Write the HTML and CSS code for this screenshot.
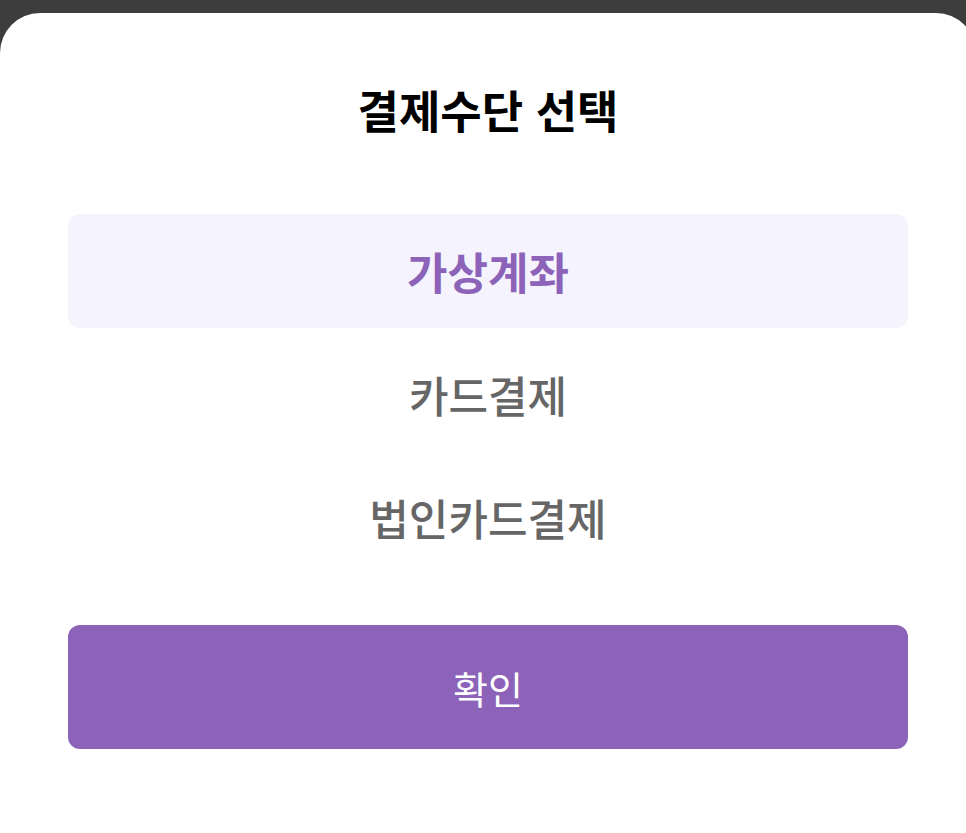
FILE: index.html
```html
<!DOCTYPE html>
<html lang="ko">
<head>
<meta charset="utf-8">
<title>결제수단 선택</title>
<link rel="stylesheet" href="styles.css">
</head>
<body>
<div class="sheet">
  <h1 class="title">결제수단 선택</h1>
  <ul class="options">
    <li class="option selected">가상계좌</li>
    <li class="option">카드결제</li>
    <li class="option">법인카드결제</li>
  </ul>
  <button class="confirm" type="button">확인</button>
</div>
</body>
</html>
```
FILE: styles.css
```css
html, body {
  margin: 0;
  padding: 0;
}
body {
  background: #3d3d3d;
  overflow: hidden;
  width: 966px;
  height: 833px;
  font-family: "Noto Sans CJK KR", "Noto Sans", sans-serif;
}
.sheet {
  box-sizing: border-box;
  width: 976px;
  min-height: 830px;
  margin-top: 13px;
  background: #ffffff;
  border-radius: 40px 40px 0 0;
  padding: 67px 68px 0;
  display: flex;
  flex-direction: column;
}
.title {
  margin: 0;
  font-size: 45px;
  font-weight: 700;
  line-height: 60px;
  color: #000;
  text-align: center;
}
.options {
  list-style: none;
  margin: 74px 0 0;
  padding: 0;
  display: flex;
  flex-direction: column;
  gap: 9px;
}
.option {
  height: 114px;
  display: flex;
  align-items: center;
  justify-content: center;
  font-size: 43px;
  font-weight: 500;
  color: #666666;
  border-radius: 12px;
}
.option.selected {
  background: #f5f4fe;
  color: #8c63b9;
  font-size: 44px;
  font-weight: 700;
}
.confirm {
  margin-top: 51px;
  height: 124px;
  border: none;
  border-radius: 12px;
  background: #8c63b9;
  color: #ffffff;
  font-family: inherit;
  font-size: 38px;
  font-weight: 400;
}
```
